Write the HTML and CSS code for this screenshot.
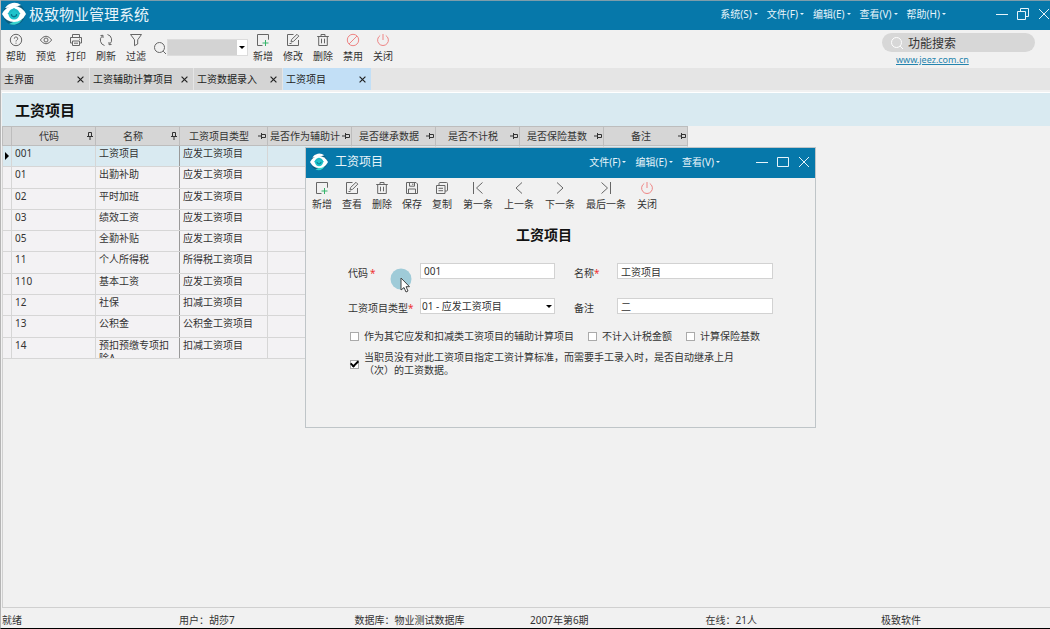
FILE: index.html
```html
<!DOCTYPE html>
<html lang="zh-CN">
<head>
<meta charset="utf-8">
<title>极致物业管理系统</title>
<link rel="stylesheet" href="styles.css">
</head>
<body>
<svg class="sprite" aria-hidden="true">
  <symbol id="logo" viewBox="0 0 24 24">
    <circle cx="12" cy="12" r="11" fill="#0b5f80"/>
    <path d="M3 6A11 11 0 0 1 19 3L13 5Z" fill="#fff"/>
    <path d="M20 18A11 11 0 0 1 7 22L13 19Z" fill="#39d3cf"/>
    <path d="M0 12Q4 4 12 4T24 12Q20 20 12 20T0 12Z" fill="#fff"/>
    <circle cx="12" cy="12" r="5.500" fill="#1fc4cb"/>
    <path d="M6 12l6-5 6 5" fill="none" stroke="#1fb6c4" stroke-width="1.500"/>
    <path d="M9.500 12v1.500q2.500 2.500 5 0V12" fill="none" stroke="#08788f" stroke-width="1.300"/>
  </symbol>
  <symbol id="help" viewBox="0 0 14 14"><circle cx="7" cy="7" r="5.700"/><path d="M5.300 5.700a1.700 1.700 0 1 1 2.400 1.500Q7 7.600 7 8.500M7 9.700v1"/></symbol>
  <symbol id="eye" viewBox="0 0 14 14"><path d="M1.300 7Q4 3.200 7 3.200T12.700 7Q10 10.800 7 10.800T1.300 7Z"/><circle cx="7" cy="7" r="2"/></symbol>
  <symbol id="print" viewBox="0 0 14 14"><path d="M3.500 4V1.500h7V4M3.500 10H1.500V4.500h11V10h-2M3.500 8h7v4.500h-7zM5 10.200h4M10 6.200h1"/></symbol>
  <symbol id="refresh" viewBox="0 0 14 14"><path d="M5.500 12.500A5.500 5.500 0 0 1 3.500 2.800M1.500 2.500L4 2.300V5M8.500 1.500a5.500 5.500 0 0 1 2 9.700M12.500 11.500L10 11.700V9"/></symbol>
  <symbol id="funnel" viewBox="0 0 14 14"><path d="M1.500 1.500h11L8.700 6.800v4.200L5.500 12.700V6.800Z"/></symbol>
  <symbol id="search" viewBox="0 0 14 14"><circle cx="6.500" cy="6.500" r="5"/><path d="M10.200 10.200l2.800 2.800"/></symbol>
  <symbol id="new" viewBox="0 0 14 14"><path d="M6.500 12.500h-5v-11h11v5.200"/><path d="M9.500 7v6M6.500 10h6" stroke="#35b56a"/></symbol>
  <symbol id="edit" viewBox="0 0 14 14"><path d="M7.500 1.500h-6v11h11V7M5 9l.6-2.500L11 1.300l1.800 1.800-5.300 5.300ZM3.500 10.500h2"/></symbol>
  <symbol id="trash" viewBox="0 0 14 14"><path d="M1.200 3.500h11.600M5 3.300V1.500h4v1.800M2.700 3.500v9h8.600v-9M5.500 5.700v4.600M8.500 5.700v4.600"/></symbol>
  <symbol id="ban" viewBox="0 0 14 14"><circle cx="7" cy="7" r="5.700"/><path d="M3 11l8-8"/></symbol>
  <symbol id="power" viewBox="0 0 14 14"><path d="M7 1v6M4.200 2.500a5.400 5.400 0 1 0 5.600 0"/></symbol>
  <symbol id="save" viewBox="0 0 14 14"><path d="M1.500 1.500h9.500l1.500 1.500v9.500h-11zM4.500 1.500v3.700h5V1.500M3.500 12.500V8h7v4.500M7.800 2.500v1.500"/></symbol>
  <symbol id="copy" viewBox="0 0 14 14"><path d="M4 4V2.500q0-1 1-1h6.500q1 0 1 1V9q0 1-1 1H10M1.500 4.500h8.500v8h-8.500zM3.500 7.300h4.500M3.500 9.700h4.500"/></symbol>
  <symbol id="first" viewBox="0 0 14 14"><path d="M2.500 1v12M11.500 1.500L5.500 7l6 5.500"/></symbol>
  <symbol id="prev" viewBox="0 0 14 14"><path d="M10 1.500L4 7l6 5.500"/></symbol>
  <symbol id="next" viewBox="0 0 14 14"><path d="M4 1.500L10 7l-6 5.500"/></symbol>
  <symbol id="last" viewBox="0 0 14 14"><path d="M11.500 1v12M2.500 1.500L8.500 7l-6 5.500"/></symbol>
  <symbol id="min" viewBox="0 0 12 12"><path d="M0 6.500h12"/></symbol>
  <symbol id="max" viewBox="0 0 12 12"><path d="M.5 1.500h11v9H.5z"/></symbol>
  <symbol id="restore" viewBox="0 0 12 12"><path d="M.5 3.500h8v8h-8zM3.500 3.500v-3h8v8h-3"/></symbol>
  <symbol id="close" viewBox="0 0 12 12"><path d="M1 1l10 10M11 1L1 11"/></symbol>
  <symbol id="pin" viewBox="0 0 8 8"><path d="M2.500 4.500v-4h3v4M1 4.500h6M4 4.500V8"/></symbol>
</svg>

<div class="app">
  <header class="titlebar">
    <svg class="logo"><use href="#logo"/></svg>
    <h1 class="app-title">极致物业管理系统</h1>
    <nav class="menu">
      <button>系统(S)</button><button>文件(F)</button><button>编辑(E)</button><button>查看(V)</button><button>帮助(H)</button>
    </nav>
    <div class="window-buttons main-buttons">
      <button aria-label="最小化"><svg><use href="#min"/></svg></button>
      <button aria-label="还原"><svg><use href="#restore"/></svg></button>
      <button aria-label="关闭窗口"><svg><use href="#close"/></svg></button>
    </div>
  </header>

  <div class="toolbar">
    <div class="tools">
      <button class="tool"><svg><use href="#help"/></svg>帮助</button>
      <button class="tool"><svg><use href="#eye"/></svg>预览</button>
      <button class="tool"><svg><use href="#print"/></svg>打印</button>
      <button class="tool"><svg><use href="#refresh"/></svg>刷新</button>
      <button class="tool"><svg><use href="#funnel"/></svg>过滤</button>
    </div>
    <label class="quick">
      <svg class="icon"><use href="#search"/></svg>
      <span class="picker"><select class="quick-select" aria-label="查找"><option></option></select></span>
    </label>
    <div class="tools">
      <button class="tool"><svg><use href="#new"/></svg>新增</button>
      <button class="tool"><svg><use href="#edit"/></svg>修改</button>
      <button class="tool"><svg><use href="#trash"/></svg>删除</button>
      <button class="tool red"><svg><use href="#ban"/></svg>禁用</button>
      <button class="tool red"><svg><use href="#power"/></svg>关闭</button>
    </div>
    <div class="finder">
      <label class="pill"><svg class="icon"><use href="#search"/></svg><input type="text" aria-label="功能搜索" value="功能搜索"></label>
      <a class="site" href="#">www.jeez.com.cn</a>
    </div>
  </div>

  <div class="tabs">
    <div class="tab"><button>主界面</button><button class="x" aria-label="关闭主界面"><svg><use href="#close"/></svg></button></div>
    <div class="tab"><button>工资辅助计算项目</button><button class="x" aria-label="关闭工资辅助计算项目"><svg><use href="#close"/></svg></button></div>
    <div class="tab"><button>工资数据录入</button><button class="x" aria-label="关闭工资数据录入"><svg><use href="#close"/></svg></button></div>
    <div class="tab active"><button>工资项目</button><button class="x" aria-label="关闭工资项目"><svg><use href="#close"/></svg></button></div>
  </div>

  <main class="page">
    <h2 class="page-title">工资项目</h2>
    <table class="grid">
      <colgroup><col class="c-mark"><col class="c-std"><col class="c-std"><col class="c-type"><col class="c-std"><col class="c-std"><col class="c-std"><col class="c-std"><col class="c-std"></colgroup>
      <thead>
        <tr>
          <th></th>
          <th><div class="head"><span>代码</span><svg><use href="#pin"/></svg></div></th>
          <th><div class="head"><span>名称</span><svg><use href="#pin"/></svg></div></th>
          <th><div class="head side"><span>工资项目类型</span><svg><use href="#pin"/></svg></div></th>
          <th><div class="head side"><span>是否作为辅助计</span><svg><use href="#pin"/></svg></div></th>
          <th><div class="head side"><span>是否继承数据</span><svg><use href="#pin"/></svg></div></th>
          <th><div class="head side"><span>是否不计税</span><svg><use href="#pin"/></svg></div></th>
          <th><div class="head side"><span>是否保险基数</span><svg><use href="#pin"/></svg></div></th>
          <th><div class="head side"><span>备注</span><svg><use href="#pin"/></svg></div></th>
        </tr>
      </thead>
      <tbody>
        <tr class="current"><td class="mark"></td><td>001</td><td>工资项目</td><td>应发工资项目</td><td class="flag"><input type="checkbox" aria-label="辅助计算"></td><td></td><td></td><td></td><td></td></tr>
        <tr><td></td><td>01</td><td>出勤补助</td><td>应发工资项目</td><td class="flag"><input type="checkbox" aria-label="辅助计算"></td><td></td><td></td><td></td><td></td></tr>
        <tr><td></td><td>02</td><td>平时加班</td><td>应发工资项目</td><td class="flag"><input type="checkbox" aria-label="辅助计算"></td><td></td><td></td><td></td><td></td></tr>
        <tr><td></td><td>03</td><td>绩效工资</td><td>应发工资项目</td><td class="flag"><input type="checkbox" aria-label="辅助计算"></td><td></td><td></td><td></td><td></td></tr>
        <tr><td></td><td>05</td><td>全勤补贴</td><td>应发工资项目</td><td class="flag"><input type="checkbox" aria-label="辅助计算"></td><td></td><td></td><td></td><td></td></tr>
        <tr><td></td><td>11</td><td>个人所得税</td><td>所得税工资项目</td><td class="flag"><input type="checkbox" aria-label="辅助计算"></td><td></td><td></td><td></td><td></td></tr>
        <tr><td></td><td>110</td><td>基本工资</td><td>应发工资项目</td><td class="flag"><input type="checkbox" aria-label="辅助计算"></td><td></td><td></td><td></td><td></td></tr>
        <tr><td></td><td>12</td><td>社保</td><td>扣减工资项目</td><td class="flag"><input type="checkbox" aria-label="辅助计算"></td><td></td><td></td><td></td><td></td></tr>
        <tr><td></td><td>13</td><td>公积金</td><td>公积金工资项目</td><td class="flag"><input type="checkbox" aria-label="辅助计算"></td><td></td><td></td><td></td><td></td></tr>
        <tr><td></td><td>14</td><td><div class="clip">预扣预缴专项扣除A</div></td><td>扣减工资项目</td><td class="flag"><input type="checkbox" aria-label="辅助计算"></td><td></td><td></td><td></td><td></td></tr>
      </tbody>
    </table>
  </main>

  <footer class="status">
    <span>就绪</span><span>用户：胡莎7</span><span>数据库：物业测试数据库</span><span>2007年第6期</span><span>在线：21人</span><span>极致软件</span>
  </footer>

  <section class="dialog" role="dialog" aria-labelledby="dialog-name">
    <header class="dialog-bar">
      <svg class="logo small"><use href="#logo"/></svg>
      <h2 class="dialog-name" id="dialog-name">工资项目</h2>
      <nav class="menu"><button>文件(F)</button><button>编辑(E)</button><button>查看(V)</button></nav>
      <div class="window-buttons">
        <button aria-label="最小化"><svg><use href="#min"/></svg></button>
        <button aria-label="最大化"><svg><use href="#max"/></svg></button>
        <button aria-label="关闭窗口"><svg><use href="#close"/></svg></button>
      </div>
    </header>
    <div class="dialog-tools">
      <div class="tools">
        <button class="tool"><svg><use href="#new"/></svg>新增</button>
        <button class="tool"><svg><use href="#edit"/></svg>查看</button>
        <button class="tool"><svg><use href="#trash"/></svg>删除</button>
        <button class="tool"><svg><use href="#save"/></svg>保存</button>
        <button class="tool"><svg><use href="#copy"/></svg>复制</button>
      </div>
      <div class="tools records">
        <button class="tool"><svg><use href="#first"/></svg>第一条</button>
        <button class="tool"><svg><use href="#prev"/></svg>上一条</button>
        <button class="tool"><svg><use href="#next"/></svg>下一条</button>
        <button class="tool"><svg><use href="#last"/></svg>最后一条</button>
        <button class="tool red"><svg><use href="#power"/></svg>关闭</button>
      </div>
    </div>
    <form class="form">
      <h3 class="form-title">工资项目</h3>
      <div class="fields">
        <label for="code">代码<span class="req spaced">*</span></label>
        <input class="box" id="code" type="text" value="001">
        <label class="second" for="name">名称<span class="req">*</span></label>
        <input class="box" id="name" type="text" value="工资项目">
        <label for="type">工资项目类型<span class="req">*</span></label>
        <span class="picker"><select class="box" id="type"><option>01 - 应发工资项目</option></select></span>
        <label class="second" for="note">备注</label>
        <input class="box" id="note" type="text" value="二">
      </div>
      <div class="checks">
        <label class="check"><input type="checkbox">作为其它应发和扣减类工资项目的辅助计算项目</label>
        <label class="check"><input type="checkbox">不计入计税金额</label>
        <label class="check"><input type="checkbox">计算保险基数</label>
      </div>
      <label class="check"><input type="checkbox" checked><span>当职员没有对此工资项目指定工资计算标准，而需要手工录入时，是否自动继承上月<br>（次）的工资数据。</span></label>
    </form>
  </section>

  <svg class="pointer" viewBox="0 0 22 26" aria-hidden="true">
    <circle cx="11" cy="11" r="10.500" fill="#9fcbd8"/>
    <path d="M11 10v12l3-2.500 2 4.500 2-1-2-4.300h3.500Z" fill="#fff" stroke="#444" stroke-width="1"/>
  </svg>
</div>
</body>
</html>
```
FILE: styles.css
```css
* { box-sizing: border-box; }

body {
  margin: 0;
  font: 10px/14px "Noto Sans", "Noto Sans CJK SC", sans-serif;
  color: #333;
  background: #f1f1f1;
}

button, input, select {
  font: inherit;
  color: inherit;
  margin: 0;
  padding: 0;
  border: 0;
  border-radius: 0;
  background: none;
}

h1, h2, h3 { margin: 0; }

svg { display: block; flex: none; }

.sprite { position: absolute; width: 0; height: 0; }

.app {
  position: relative;
  display: flex;
  flex-direction: column;
  min-height: 100vh;
  border-left: 1px solid #b5b5b5;
  border-bottom: 1px solid #000;
}

/* Title bars */
.titlebar {
  display: flex;
  align-items: center;
  height: 30px;
  padding: 0 0 4px 1px;
  border-top: 1px solid #7d9dab;
  background: #0678aa;
  color: #e6f4fa;
}

.logo { width: 24px; height: 24px; }
.logo.small { width: 18px; height: 18px; }

.app-title {
  flex: 1;
  padding-left: 3px;
  font-size: 15px;
  line-height: 22px;
  font-weight: 400;
}

.menu { display: flex; gap: 9px; }

.menu button {
  display: flex;
  align-items: center;
  gap: 2px;
  white-space: nowrap;
}

.menu button::after {
  content: "";
  border: 2px solid transparent;
  border-top-color: currentColor;
  border-bottom: 0;
}

.window-buttons {
  display: flex;
  gap: 9px;
  margin-left: 36px;
}

.window-buttons svg {
  width: 12px;
  height: 12px;
  fill: none;
  stroke: #e6f4fa;
}

.main-buttons { margin-left: 50px; }

/* Toolbars */
.toolbar {
  display: flex;
  align-items: flex-start;
  padding: 3px 15px 0 5px;
}

.tools { display: flex; gap: 10px; }

.tool {
  display: flex;
  flex-direction: column;
  align-items: center;
  gap: 2px;
  white-space: nowrap;
}

.tool svg {
  width: 14px;
  height: 14px;
  fill: none;
  stroke: #666;
}

.tool.red svg { stroke: #ee8585; }

.quick {
  display: flex;
  align-items: center;
  padding: 6px 5px 0 7px;
}

.icon {
  width: 14px;
  height: 14px;
  fill: none;
  stroke: #666;
}

.picker { position: relative; display: flex; }

.picker::after {
  content: "";
  position: absolute;
  right: 3px;
  top: 7px;
  border: 3px solid transparent;
  border-top-color: #000;
  border-bottom: 0;
  pointer-events: none;
}

.picker select { appearance: none; }

.quick-select {
  width: 81px;
  height: 17px;
  border: 1px solid #dcdcdc;
  background: linear-gradient(to left, #fff 10px, #d3d3d3 10px);
}

.finder { margin-left: auto; width: 153px; }

.pill {
  display: flex;
  align-items: center;
  gap: 4px;
  height: 19px;
  padding: 0 8px;
  border-radius: 10px;
  background: #d7d7d7;
  font-size: 12px;
}

.pill .icon { stroke: #fff; }
.pill input { flex: 1; min-width: 0; height: 18px; }

.site {
  display: block;
  width: max-content;
  margin-left: 14px;
  font-size: 9px;
  line-height: 16px;
  color: #2484ae;
}

/* Tabs */
.tabs {
  display: flex;
  gap: 1px;
  height: 22px;
  background: #e5e5e5;
}

.tab {
  display: flex;
  align-items: center;
  justify-content: space-between;
  gap: 8px;
  min-width: 88px;
  padding: 0 5px 0 3px;
  background: #d4d4d4;
  color: #222;
}

.tab.active { background: #c2dff6; }
.tab .x svg { width: 7px; height: 7px; fill: none; stroke: #222; stroke-width: 2; }

/* Grid page */
.page {
  flex: 1;
  margin: 2px 0 0 1px;
  border-top: 1px solid #fff;
  border-bottom: 1px solid #d0d0d0;
  box-shadow: inset 1px 0 #d0d0d0;
}

.page-title {
  height: 33px;
  padding-left: 13px;
  background: #d9eaf1;
  color: #111;
  font-size: 15px;
  line-height: 34px;
}

.grid {
  width: 684px;
  height: 233px;
  table-layout: fixed;
  border-collapse: collapse;
}

.c-mark { width: 9px; }
.c-std { width: 84px; }
.c-type { width: 88px; }

.grid th {
  height: 19px;
  padding: 0;
  border: 1px solid #bdbdbd;
  background: #d6d6d6;
  font-weight: 400;
}

.head { display: flex; align-items: center; padding-right: 1px; }
.head span { flex: 1; white-space: nowrap; }
.head svg { width: 8px; height: 8px; fill: none; stroke: #333; }
.head.side svg { transform: rotate(90deg); }

.grid td {
  height: 21px;
  padding: 1px 3px 0;
  border: 1px solid #d6d6d6;
  background: #f3f2f4;
  line-height: 13px;
  vertical-align: top;
}

.grid td:nth-child(3) { border-right-color: #999; }
.grid .current td { background: #d9eaf1; }

.grid .mark { padding: 6px 0 0 2px; }

.mark::after {
  content: "";
  display: block;
  width: 0;
  border: 4px solid transparent;
  border-left-color: #000;
  border-right: 0;
}

.clip { height: 19px; overflow: hidden; }
.flag { text-align: center; }

input[type="checkbox"] {
  appearance: none;
  display: grid;
  place-content: center;
  flex: none;
  width: 9px;
  height: 9px;
  border: 1px solid #aaa;
  background: #fff;
}

.flag input[type="checkbox"] { margin: 4px auto 0; }

input[type="checkbox"]:checked::after {
  content: "";
  width: 3px;
  height: 6px;
  margin-bottom: 2px;
  border: solid #000;
  border-width: 0 2px 2px 0;
  transform: rotate(45deg);
}

/* Status bar */
.status {
  display: grid;
  grid-template-columns: 177px repeat(4, 1fr) 169px;
  padding: 5px 0 1px 1px;
}

/* Record dialog */
.dialog {
  position: absolute;
  left: 304px;
  top: 147px;
  width: 511px;
  min-height: 281px;
  border: 1px solid #bfc5c8;
  background: #f1f1f1;
}

.dialog-bar {
  display: flex;
  align-items: center;
  height: 30px;
  padding: 0 5px 3px 4px;
  background: #0678aa;
  color: #e6f4fa;
}

.dialog-name {
  flex: 1;
  padding-left: 7px;
  font-size: 12px;
  line-height: 18px;
  font-weight: 400;
}

.dialog-tools { display: flex; gap: 11px; padding: 3px 6px 0; }
.records { gap: 11px; }

.form { padding: 14px 41px 0 42px; }

.form-title {
  padding-right: 34px;
  text-align: center;
  color: #111;
  font-size: 14px;
  line-height: 20px;
}

.fields {
  display: grid;
  grid-template-columns: 72px 135px 62px 156px;
  row-gap: 19px;
  align-items: center;
  margin-top: 18px;
}

.fields label { padding-top: 2px; margin-bottom: -1px; }
.fields .second { padding-left: 19px; }

.req { color: #e33; }
.spaced { padding-left: 2px; }

.box {
  width: 100%;
  height: 16px;
  padding: 0 3px;
  border: 1px solid #d2d2d2;
  background: #fff;
}

.picker .box { padding: 0 1px; }

.checks {
  display: flex;
  gap: 12px;
  margin: 16px 0 8px;
}

.check {
  display: flex;
  align-items: center;
  gap: 5px;
  padding-left: 2px;
  line-height: 13px;
  white-space: nowrap;
}

.pointer {
  position: absolute;
  left: 389px;
  top: 268px;
  width: 22px;
  height: 26px;
}
```
